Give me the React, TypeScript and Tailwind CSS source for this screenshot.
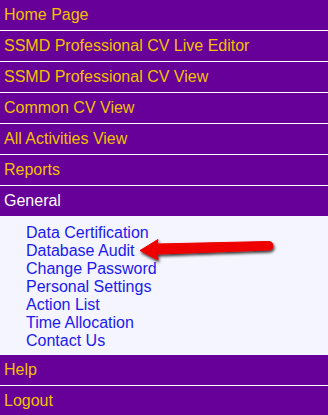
import React from 'react';

const topItems = [
  'Home Page',
  'SSMD Professional CV Live Editor',
  'SSMD Professional CV View',
  'Common CV View',
  'All Activities View',
  'Reports',
];

const subItems = [
  'Data Certification',
  'Database Audit',
  'Change Password',
  'Personal Settings',
  'Action List',
  'Time Allocation',
  'Contact Us',
];

const MenuRow: React.FC<{ label: string; active?: boolean; noBorder?: boolean }> = ({ label, active, noBorder }) => (
  <div
    className={`px-1 flex items-center bg-[#660099] text-[16px] leading-none ${
      noBorder ? 'h-[30px]' : 'h-[31px] border-b border-white'
    } ${active ? 'text-white' : 'text-[#f2c200]'}`}
  >
    <span>{label}</span>
  </div>
);

const Arrow: React.FC = () => (
  <svg className="absolute left-[136px] top-[232px]" width="146" height="36" viewBox="0 0 146 36">
    <defs>
      <filter id="sh" x="-10%" y="-40%" width="130%" height="200%">
        <feGaussianBlur in="SourceAlpha" stdDeviation="1.6" />
        <feOffset dx="1" dy="2" result="b" />
        <feComponentTransfer>
          <feFuncA type="linear" slope="0.8" />
        </feComponentTransfer>
        <feMerge>
          <feMergeNode />
          <feMergeNode in="SourceGraphic" />
        </feMerge>
      </filter>
    </defs>
    <g filter="url(#sh)">
      <path
        d="M4 18.5 L22 7.5 L21 12 L132 9.5 Q137 9.5 137 14 Q137 18 132 18 L21 22 L22 28 Z"
        fill="#ee0000"
        stroke="#ee0000"
        strokeWidth="1"
        strokeLinejoin="round"
      />
    </g>
  </svg>
);

export default function App() {
  return (
    <div className="relative w-[328px] h-[415px] overflow-hidden bg-white font-['Liberation_Sans',Arial,sans-serif]">
      {topItems.map((t) => (
        <MenuRow key={t} label={t} />
      ))}
      <MenuRow label="General" active noBorder />
      <div className="bg-[#f5f5ff] pl-[26px] pt-2 h-[139px]">
        {subItems.map((s) => (
          <div key={s} className="text-[16px] leading-[18px] text-[#1a1aee]">
            {s}
          </div>
        ))}
      </div>
      <MenuRow label="Help" />
      <MenuRow label="Logout" />
      <Arrow />
    </div>
  );
}
